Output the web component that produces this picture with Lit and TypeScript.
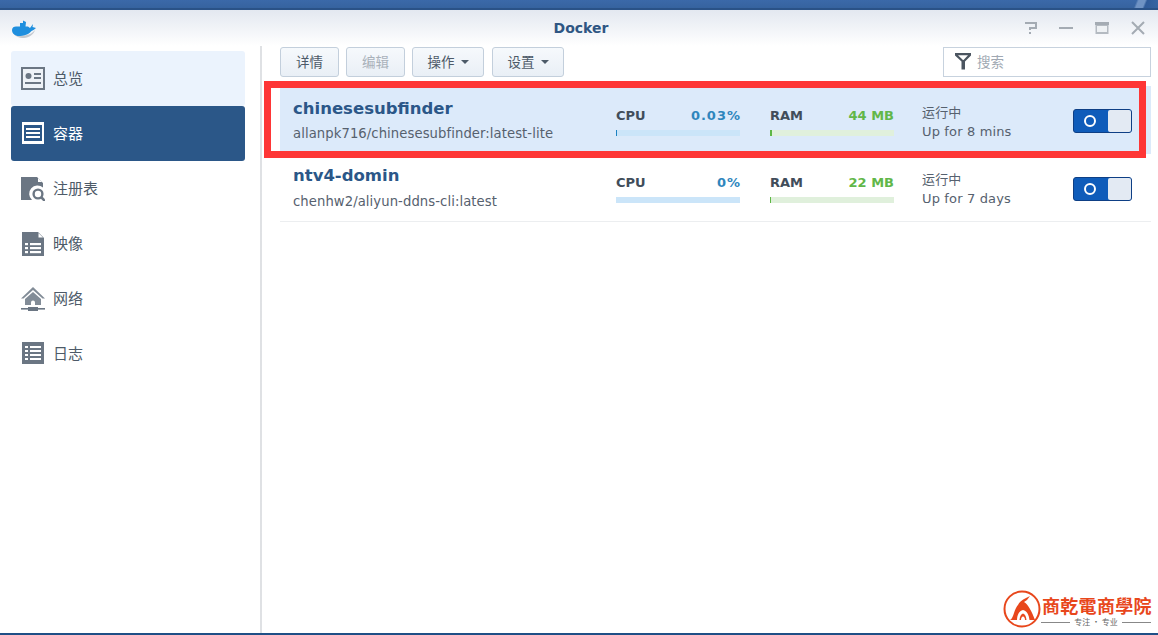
import { LitElement, html, css, svg } from "lit";
import { customElement } from "lit/decorators.js";

const G = "#6b7683";
const navIcons = [
  svg`<rect x="0" y="0" width="24" height="23" fill="${G}"/><rect x="2" y="2" width="20" height="19" fill="#eef2f7"/><circle cx="7.5" cy="9" r="3" fill="${G}"/><rect x="13" y="6" width="7" height="2" fill="${G}"/><rect x="13" y="10" width="7" height="2" fill="${G}"/><rect x="4" y="15" width="16" height="2" fill="${G}"/>`,
  svg`<rect x="1" y="0" width="22" height="3" fill="#fff"/><rect x="1" y="19" width="22" height="3" fill="#fff"/><rect x="1" y="3" width="2" height="16" fill="#fff"/><rect x="21" y="3" width="2" height="16" fill="#fff"/><rect x="5" y="6" width="14" height="2" fill="#fff"/><rect x="5" y="10" width="14" height="2" fill="#fff"/><rect x="5" y="14" width="14" height="2" fill="#fff"/>`,
  svg`<path d="M0 0H16L22 6V10.5A8 8 0 0 0 11 23H0Z" fill="${G}"/><path d="M17 1L21 5H17Z" fill="#fff"/><circle cx="17" cy="17" r="4.4" fill="none" stroke="${G}" stroke-width="2.4"/><path d="M20 20L24 24" stroke="${G}" stroke-width="2.6"/>`,
  svg`<path d="M1 0H17L23 6V24H1Z" fill="${G}"/><path d="M17.5 1L22 5.5H17.5Z" fill="#fff"/><rect x="4" y="11" width="3" height="2.2" fill="#fff"/><rect x="9" y="11" width="11" height="2.2" fill="#fff"/><rect x="4" y="15" width="3" height="2.2" fill="#fff"/><rect x="9" y="15" width="11" height="2.2" fill="#fff"/><rect x="4" y="19" width="3" height="2.2" fill="#fff"/><rect x="9" y="19" width="11" height="2.2" fill="#fff"/>`,
  svg`<path d="M12 0L24 11.5H21.5L12 3L2.5 11.5H0Z" fill="#828c97"/><path d="M12 5L20 12V18H14V15.5A2 2 0 0 0 10 15.5V18H4V12Z" fill="#828c97"/><rect x="7" y="20" width="10" height="4" fill="${G}"/><rect x="0" y="21" width="24" height="1.6" fill="${G}"/>`,
  svg`<rect x="1" y="0" width="22" height="22" fill="${G}"/><rect x="4" y="4" width="3" height="2" fill="#fff"/><rect x="9" y="4" width="11" height="2" fill="#fff"/><rect x="4" y="8" width="3" height="2" fill="#fff"/><rect x="9" y="8" width="11" height="2" fill="#fff"/><rect x="4" y="12" width="3" height="2" fill="#fff"/><rect x="9" y="12" width="11" height="2" fill="#fff"/><rect x="4" y="16" width="3" height="2" fill="#fff"/><rect x="9" y="16" width="11" height="2" fill="#fff"/>`,
];
const navs = ["总览", "容器", "注册表", "映像", "网络", "日志"];
const rows = [
  { name: "chinesesubfinder", image: "allanpk716/chinesesubfinder:latest-lite", cpu: "0.03%", cpuW: 1, ram: "44 MB", ramW: 2, up: "Up for 8 mins", sel: true },
  { name: "ntv4-domin", image: "chenhw2/aliyun-ddns-cli:latest", cpu: "0%", cpuW: 0, ram: "22 MB", ramW: 1, up: "Up for 7 days", sel: false },
];

@customElement("app-root")
export class AppRoot extends LitElement {
  static styles = css`
    :host { display: block; width: 1158px; height: 635px; overflow: hidden; position: relative; background: #fff;
      font-family: "DejaVu Sans", "Noto Sans CJK SC", sans-serif; color: #4a5665; }
    .strip { height: 10px; box-sizing: border-box; border-bottom: 2px solid #2a5287;
      background: linear-gradient(112deg, transparent 1054px, #6f93c4 1056px, #6f93c4 1062px, #2f5b99 1064px, transparent 1078px), linear-gradient(#3b69a9, #36639f); }
    .title { height: 36px; box-sizing: border-box; padding-left: 4px; position: relative; display: flex; align-items: center; justify-content: center;
      background: linear-gradient(#e3e8f0, #ffffff); font-size: 14px; font-weight: 700; color: #2f5683; }
    .logo { position: absolute; left: 11px; top: 9px; }
    .winbtns { position: absolute; right: 13px; top: 11px; display: flex; gap: 22px; }
    .main { display: flex; height: 589px; border-bottom: 2px solid #1f4f86; box-sizing: border-box; }
    .side { width: 262px; box-sizing: border-box; padding: 5px 15px 0 11px; flex: none; position: relative;
      border-right: 2px solid; border-image: linear-gradient(90deg, #f3f4f5, #dfe1e4) 1; }
    .nav { height: 55px; display: flex; align-items: center; gap: 8px; padding-left: 10px; font-size: 15px; color: #4d5a68; border-radius: 3px; }
    .nav span { padding-bottom: 3px; }
    .nav.light { background: #ebf3fd; }
    .nav.on { background: #2b5788; color: #fff; }
    .nav svg { flex: none; }
    .content { flex: 1; min-width: 0; padding: 1px 7px 0 0; }
    .toolbar { display: flex; align-items: center; gap: 7px; height: 30px; padding-left: 18px; }
    .btn { height: 30px; box-sizing: border-box; border: 1px solid #c3cfdc; border-radius: 3px; background: linear-gradient(#f6f9fc, #e9eff6);
      font-size: 13.5px; color: #4d5a68; display: flex; align-items: center; justify-content: center; gap: 6px; width: 59px; padding-bottom: 2px; }
    .btn.dis { color: #a9b1ba; }
    .btn.wide { width: 72px; }
    .btn.wide + .btn.wide { margin-left: 1px; }
    .caret { width: 0; height: 0; border: 4px solid transparent; border-top-color: #4d5a68; border-bottom: 0; margin-top: 2px; }
    .search { margin-left: auto; width: 208px; height: 30px; box-sizing: border-box; border: 1px solid #c7d2de; display: flex; align-items: center;
      gap: 5px; padding: 0 0 2px 10px; font-size: 13.5px; color: #a0a8b2; background: #fff; }
    .list { margin-top: 9px; }
    .row { height: 68px; display: flex; align-items: stretch; margin-left: 18px; box-sizing: border-box; border-bottom: 1px solid #eceef0; }
    .row.sel { background: #dceafa; border-bottom: 0; }
    .info { width: 336px; flex: none; padding: 10px 0 0 13px; box-sizing: border-box; }
    .sel .info { padding-top: 11px; }
    .name { font-size: 16.5px; font-weight: 700; color: #2b5788; line-height: 24px; }
    .img { font-size: 13.2px; letter-spacing: 0.08px; line-height: 18px; margin-top: 5px; color: #56616e; white-space: nowrap; }
    .sel .img { margin-top: 4px; }
    .meter { width: 124px; margin-top: 20px; margin-right: 30px; flex: none; }
    .mhead { display: flex; justify-content: space-between; font-size: 13px; font-weight: 700; line-height: 18px; }
    .sel .mhead { padding-top: 1px; }
    .mlabel { color: #414d5a; }
    .cpu { color: #2f86bd; letter-spacing: 1px; margin-right: -1px; }
    .ram { color: #62b749; }
    .bar { height: 6px; margin-top: 5px; }
    .bar.c { background: #cbe5f9; }
    .bar.r { background: #e0f0dc; }
    .fill { height: 100%; }
    .c .fill { background: #1d82c2; }
    .r .fill { background: #5db745; }
    .status { flex: 1; padding-top: 16px; font-size: 13px; letter-spacing: 0.15px; line-height: 19px; color: #56616e; margin-left: -2px; }
    .sel .status { padding-top: 17px; }
    .toggle { width: 59px; height: 24px; box-sizing: border-box; margin: 23px 19px 0 0; flex: none; border-radius: 3px; background: #0f5cba;
      border: 1px solid #0e3f85; display: flex; align-items: center; position: relative; }
    .toggle i { width: 12px; height: 12px; box-sizing: border-box; border: 2.5px solid #fff; border-radius: 50%; margin-left: 10px; }
    .toggle b { position: absolute; right: 0; top: 0; bottom: 0; width: 23px; background: #e3eaf3; border-radius: 2px; }
    .mark { position: absolute; left: 264px; top: 81px; width: 882px; height: 77px; box-sizing: border-box; border: 7px solid #fe3636; pointer-events: none; }
    .brand { position: absolute; left: 1003px; top: 590px; width: 150px; height: 43px; }
    .brand .ring { position: absolute; left: 0; top: 0; }
    .brand .cn { position: absolute; left: 39px; top: 4px; font: 700 18px/22px "Noto Sans CJK TC", sans-serif; color: #e8471c; letter-spacing: 0.3px; white-space: nowrap; }
    .brand .sub { position: absolute; left: 38px; top: 27px; width: 110px; display: flex; align-items: center; gap: 4px; font: 8px/10px "Noto Sans CJK SC", sans-serif; color: #666; white-space: nowrap; }
    .brand .sub s { flex: 1; height: 1px; background: #888; }
  `;

  render() {
    return html`
      <div class="strip"></div>
      <div class="title">
        <svg class="logo" width="26" height="20" viewBox="0 0 26 20">
          <path d="M2 13C3 17 8 19 13 19C18 19 23 15 24 11L22 13C18 17 8 18 2 13Z" fill="#c4c9cf"/>
          <path d="M1 11C1 8.5 3 7.5 5 7.5H9V4H12V1.5L15 3L14.5 7.5H17L19 9L22 5L21.5 8L25 9C23 11 21 11.5 20 12.5C17 16 12 17 8 17C4 17 1 14.5 1 11Z" fill="#1f8fde"/>
        </svg>
        Docker
        <div class="winbtns">
          <svg width="14" height="14" viewBox="0 0 14 14" fill="none" stroke="#a4abb3" stroke-width="2"><path d="M2 2H13V7H7V9"/><path d="M7 11V13"/></svg>
          <svg width="14" height="14" viewBox="0 0 14 14"><rect x="0" y="6" width="14" height="2" fill="#a4abb3"/></svg>
          <svg width="14" height="14" viewBox="0 0 14 14"><rect x="0.5" y="1" width="13" height="12" fill="#b4bac1"/><rect x="0" y="1" width="14" height="3" fill="#a4abb3"/><rect x="2" y="5" width="10" height="6" fill="#eef1f4"/></svg>
          <svg width="14" height="14" viewBox="0 0 14 14" fill="none" stroke="#a4abb3" stroke-width="2"><path d="M1 1L13 13M13 1L1 13"/></svg>
        </div>
      </div>
      <div class="main">
        <aside class="side">
          ${navs.map((n, i) => html`
            <div class="nav ${i === 0 ? "light" : i === 1 ? "on" : ""}">
              <svg width="24" height="24" viewBox="0 0 24 24">${navIcons[i]}</svg><span>${n}</span>
            </div>`)}
        </aside>
        <section class="content">
          <div class="toolbar">
            <div class="btn">详情</div>
            <div class="btn dis">编辑</div>
            <div class="btn wide">操作<span class="caret"></span></div>
            <div class="btn wide">设置<span class="caret"></span></div>
            <div class="search">
              <svg width="18" height="18" viewBox="0 0 18 18"><path d="M1 1H17V3.5L11 9.5V17.5H7.5V9.5L1 3.5ZM4 3.2L9 8H9.5L14 3.2Z" fill="#4b5560" fill-rule="evenodd"/></svg>
              搜索
            </div>
          </div>
          <div class="list">
            ${rows.map((r) => html`
              <div class="row ${r.sel ? "sel" : ""}">
                <div class="info"><div class="name">${r.name}</div><div class="img">${r.image}</div></div>
                <div class="meter">
                  <div class="mhead"><span class="mlabel">CPU</span><span class="cpu">${r.cpu}</span></div>
                  <div class="bar c"><div class="fill" style="width:${r.cpuW}px"></div></div>
                </div>
                <div class="meter">
                  <div class="mhead"><span class="mlabel">RAM</span><span class="ram">${r.ram}</span></div>
                  <div class="bar r"><div class="fill" style="width:${r.ramW}px"></div></div>
                </div>
                <div class="status"><div>运行中</div><div>${r.up}</div></div>
                <div class="toggle"><i></i><b></b></div>
              </div>`)}
          </div>
        </section>
      </div>
      <div class="mark"></div>
      <div class="brand">
        <svg class="ring" width="38" height="38" viewBox="0 0 38 38">
          <circle cx="19" cy="19" r="17.5" fill="#fff" stroke="#e8471c" stroke-width="2"/>
          <path d="M7 30C9 29 10 26 11 23C12 20 13 17 15 15C16 12 19 10 23 8L27 6L24 10L21 12C25 14 29 22 32 30Z" fill="#e8471c"/>
          <path d="M14 30C14 25 16 21 20 20C24 21 26 25 26.500 30H23.500C23 26 22 24 20 23.500C18 24 17 26 16.500 30Z" fill="#fff"/>
          <path d="M18 30C18 28 19 26.500 20 26.500C21 26.500 22 28 22 30Z" fill="#fff"/>
        </svg>
        <div class="cn">商乾電商學院</div>
        <div class="sub"><s></s>专注 · 专业<s></s></div>
      </div>
    `;
  }
}
